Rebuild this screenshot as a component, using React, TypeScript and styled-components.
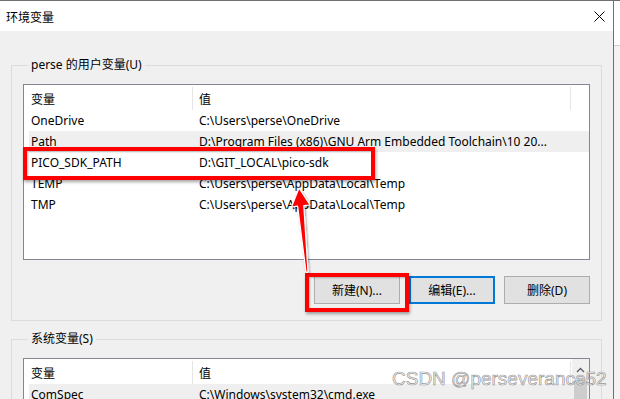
import React from "react";
import styled, { createGlobalStyle } from "styled-components";

const Global = createGlobalStyle`
  html, body { margin: 0; padding: 0; background: #ffffff; }
  body { font-family: "Noto Sans", "Noto Sans CJK SC", sans-serif; }
`;

const Screen = styled.div`
  position: relative;
  width: 620px;
  height: 399px;
  overflow: hidden;
  display: flex;
  border-top: 1px solid #6f6f6f;
  box-sizing: border-box;
  font-family: "Noto Sans", "Noto Sans CJK SC", sans-serif;
  font-size: 12px;
  color: #000;
`;

const Window = styled.div`
  width: 614px;
  flex: none;
  border-right: 1px solid #6f6f6f;
  box-sizing: border-box;
  display: flex;
  flex-direction: column;
  background: #f0f0f0;
`;

const Outside = styled.div`
  flex: 1;
  display: flex;
  flex-direction: column;
`;

const OutsideTop = styled.div`
  height: 44px;
  background: #ffffff;
  border-bottom: 1px solid #cfcfcf;
`;

const OutsideRest = styled.div`
  flex: 1;
  background: #f3f3f3;
`;

const TitleBar = styled.div`
  height: 30px;
  flex: none;
  background: #ffffff;
  display: flex;
  align-items: center;
  padding: 0 8px 0 6px;
`;

const Title = styled.span`
  font-family: "Noto Sans CJK SC", sans-serif;
  font-size: 12px;
  line-height: 16px;
  margin-top: 1px;
`;

const CloseIcon = styled.svg`
  margin-left: auto;
`;

const Body = styled.div`
  flex: 1;
  padding: 34px 11px 0 11px;
  display: flex;
  flex-direction: column;
  gap: 18px;
`;

const Group = styled.div`
  border: 1px solid #dcdcdc;
  padding: 0 11px 16px 11px;
  display: flex;
  flex-direction: column;
`;

const GroupLabel = styled.span`
  display: block;
  width: fit-content;
  margin: -9px 0 0 5px;
  padding: 0 3px;
  background: #f0f0f0;
  line-height: 16px;
  font-size: 12px;
`;

const List = styled.div<{ $height: number }>`
  margin-top: 11px;
  height: ${(p) => p.$height}px;
  border: 1px solid #828790;
  background: #ffffff;
  box-sizing: border-box;
  display: flex;
  flex: none;
`;

const ListInner = styled.div`
  flex: 1;
  padding-left: 5px;
  display: flex;
  flex-direction: column;
  min-width: 0;
`;

const HeaderRow = styled.div`
  height: 25px;
  display: grid;
  grid-template-columns: 164px 378px;
  align-items: stretch;
`;

const HeaderCell = styled.div<{ $pad: number }>`
  padding-left: ${(p) => p.$pad}px;
  border-right: 1px solid #e5e5e5;
  margin-top: 2px;
  line-height: 23px;
  box-sizing: border-box;
  font-family: "Noto Sans CJK SC", sans-serif;
`;

const Row = styled.div<{ $selected?: boolean }>`
  height: 21px;
  display: grid;
  grid-template-columns: 164px 378px;
  background: ${(p) => (p.$selected ? "#efefef" : "transparent")};
`;

const Cell = styled.div<{ $pad: number }>`
  padding-left: ${(p) => p.$pad}px;
  line-height: 21px;
  white-space: nowrap;
  overflow: hidden;
  text-overflow: ellipsis;
  padding-right: 6px;
`;

const ScrollBar = styled.div`
  width: 17px;
  flex: none;
  background: #f0f0f0;
  display: flex;
  flex-direction: column;
  align-items: center;
`;

const ScrollArrow = styled.div`
  height: 21px;
  display: flex;
  align-items: center;
  justify-content: center;
`;

const ScrollThumb = styled.div`
  width: 13px;
  flex: 1;
  background: #cdcdcd;
`;

const ButtonRow = styled.div`
  margin-top: 16px;
  display: flex;
  justify-content: flex-end;
  gap: 9px;
`;

const Button = styled.div<{ $focused?: boolean }>`
  width: 86px;
  height: 28px;
  box-sizing: border-box;
  background: #e1e1e1;
  border: ${(p) => (p.$focused ? "2px solid #0078d7" : "1px solid #adadad")};
  display: flex;
  align-items: center;
  justify-content: center;
  font-size: 12px;
`;

const Highlight = styled.div<{ $x: number; $y: number; $w: number; $h: number }>`
  position: absolute;
  left: ${(p) => p.$x}px;
  top: ${(p) => p.$y}px;
  width: ${(p) => p.$w}px;
  height: ${(p) => p.$h}px;
  box-sizing: border-box;
  border: 4px solid #ff0000;
  box-shadow: 1px 2px 3px rgba(0, 0, 0, 0.35), inset 1px 1px 2px rgba(0, 0, 0, 0.25);
  pointer-events: none;
`;

const ArrowLayer = styled.svg`
  position: absolute;
  left: 0;
  top: 0;
  pointer-events: none;
`;

const Watermark = styled.div`
  position: absolute;
  left: 392px;
  top: 366px;
  font-family: "Liberation Sans", Arial, sans-serif;
  font-size: 19px;
  line-height: 24px;
  color: rgba(245, 245, 245, 0.85);
  -webkit-text-stroke: 0.7px rgba(120, 120, 120, 0.75);
  white-space: nowrap;
  pointer-events: none;
`;

type Item = { name: string; value: string; selected?: boolean };

const userVars: Item[] = [
  { name: "OneDrive", value: "C:\\Users\\perse\\OneDrive" },
  {
    name: "Path",
    value: "D:\\Program Files (x86)\\GNU Arm Embedded Toolchain\\10 20...",
    selected: true,
  },
  { name: "PICO_SDK_PATH", value: "D:\\GIT_LOCAL\\pico-sdk" },
  { name: "TEMP", value: "C:\\Users\\perse\\AppData\\Local\\Temp" },
  { name: "TMP", value: "C:\\Users\\perse\\AppData\\Local\\Temp" },
];

const sysVars: Item[] = [
  { name: "ComSpec", value: "C:\\Windows\\system32\\cmd.exe", selected: true },
];

function VarList({ items, height, scroll }: { items: Item[]; height: number; scroll?: boolean }) {
  return (
    <List $height={height}>
      <ListInner>
        <HeaderRow>
          <HeaderCell $pad={2}>变量</HeaderCell>
          <HeaderCell $pad={6}>值</HeaderCell>
        </HeaderRow>
        {items.map((it) => (
          <Row key={it.name} $selected={it.selected}>
            <Cell $pad={2}>{it.name}</Cell>
            <Cell $pad={6}>{it.value}</Cell>
          </Row>
        ))}
      </ListInner>
      {scroll && (
        <ScrollBar>
          <ScrollArrow>
            <svg width="9" height="6" viewBox="0 0 9 6">
              <path d="M1 5 L4.5 1.5 L8 5" fill="none" stroke="#606060" strokeWidth="1.4" />
            </svg>
          </ScrollArrow>
          <ScrollThumb />
        </ScrollBar>
      )}
    </List>
  );
}

export default function App() {
  return (
    <>
      <Global />
      <Screen>
        <Window>
          <TitleBar>
            <Title>环境变量</Title>
            <CloseIcon width="11" height="11" viewBox="0 0 11 11">
              <path d="M0.5 0.5 L10.5 10.5 M10.5 0.5 L0.5 10.5" stroke="#000" strokeWidth="1" />
            </CloseIcon>
          </TitleBar>
          <Body>
            <Group>
              <GroupLabel>perse 的用户变量(U)</GroupLabel>
              <VarList items={userVars} height={176} />
              <ButtonRow>
                <Button>新建(N)...</Button>
                <Button $focused>编辑(E)...</Button>
                <Button>删除(D)</Button>
              </ButtonRow>
            </Group>
            <Group>
              <GroupLabel>系统变量(S)</GroupLabel>
              <VarList items={sysVars} height={140} scroll />
            </Group>
          </Body>
        </Window>
        <Outside>
          <OutsideTop />
          <OutsideRest />
        </Outside>

        <Highlight $x={23} $y={146} $w={352} $h={33} />
        <Highlight $x={305} $y={272} $w={104} $h={39} />

        <ArrowLayer width="620" height="399" viewBox="0 0 620 399">
          <defs>
            <filter id="sh" x="-50%" y="-50%" width="200%" height="200%">
              <feDropShadow dx="1" dy="1.5" stdDeviation="1.2" floodColor="#000" floodOpacity="0.4" />
            </filter>
          </defs>
          <polygon
            points="299,187 310,204 303.8,204.6 308,271 306,271 297.6,205.2 291.5,206"
            fill="#ff0000"
            stroke="#ffffff"
            strokeWidth="1.2"
            strokeLinejoin="round"
            filter="url(#sh)"
          />
        </ArrowLayer>

        <Watermark>CSDN @perseverance52</Watermark>
      </Screen>
    </>
  );
}
